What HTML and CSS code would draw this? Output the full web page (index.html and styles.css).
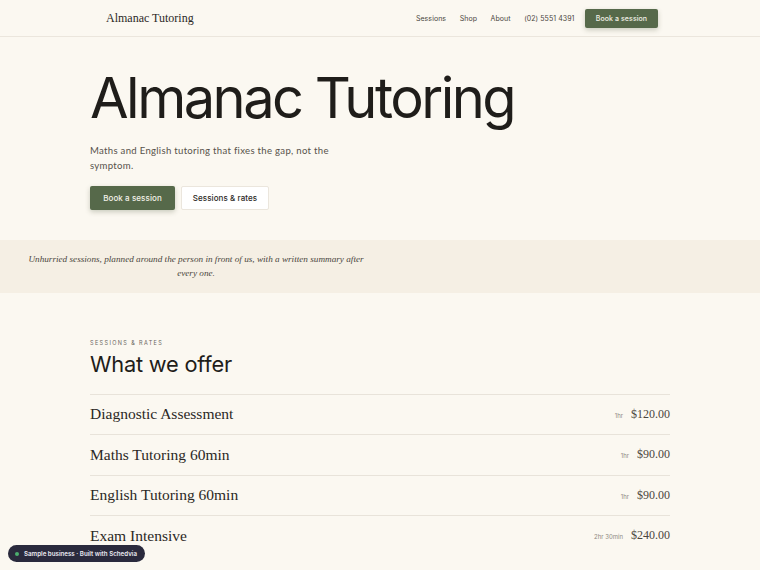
FILE: index.html
```html
<!DOCTYPE html>
<html lang="en">
<head>
<meta charset="utf-8">
<title>Almanac Tutoring</title>
<link rel="stylesheet" href="styles.css">
</head>
<body>
<header class="site-header">
  <div class="header-inner">
    <a class="logo" href="#">Almanac Tutoring</a>
    <nav class="nav">
      <a href="#">Sessions</a>
      <a href="#">Shop</a>
      <a href="#">About</a>
      <a href="#">(02) 5551 4391</a>
      <a class="btn btn-primary btn-small" href="#">Book a session</a>
    </nav>
  </div>
</header>

<section class="hero">
  <h1 class="hero-title">Almanac Tutoring</h1>
  <p class="hero-sub">Maths and English tutoring that fixes the gap, not the symptom.</p>
  <div class="hero-actions">
    <a class="btn btn-primary" href="#">Book a session</a>
    <a class="btn btn-secondary" href="#">Sessions &amp; rates</a>
  </div>
</section>

<section class="band">
  <p class="band-text">Unhurried sessions, planned around the person in front of us, with a written summary after every one.</p>
</section>

<section class="offer">
  <div class="eyebrow">Sessions &amp; rates</div>
  <h2 class="offer-title">What we offer</h2>
  <ul class="services">
    <li class="service"><span class="service-name">Diagnostic Assessment</span><span class="service-meta"><span class="dur">1hr</span><span class="price">$120.00</span></span></li>
    <li class="service"><span class="service-name">Maths Tutoring 60min</span><span class="service-meta"><span class="dur">1hr</span><span class="price">$90.00</span></span></li>
    <li class="service"><span class="service-name">English Tutoring 60min</span><span class="service-meta"><span class="dur">1hr</span><span class="price">$90.00</span></span></li>
    <li class="service"><span class="service-name">Exam Intensive</span><span class="service-meta"><span class="dur">2hr 30min</span><span class="price">$240.00</span></span></li>
  </ul>
</section>

<div class="badge"><span class="badge-dot"></span>Sample business · Built with Schedvia</div>
</body>
</html>
```

FILE: styles.css
```css
* { box-sizing: border-box; }
html, body { margin: 0; padding: 0; }
body {
  background: #fbf8f1;
  color: #1f1d1a;
  font-family: "Inter", "Liberation Sans", sans-serif;
  min-height: 570px;
}
a { text-decoration: none; color: inherit; }

.site-header {
  height: 37px;
  border-bottom: 1px solid #ebe6dd;
}
.header-inner {
  height: 36px;
  padding: 0 102px 0 106px;
  display: flex;
  align-items: center;
  justify-content: space-between;
}
.logo {
  font-family: "Liberation Serif", serif;
  font-size: 12px;
  color: #2b2825;
}
.nav {
  display: flex;
  align-items: center;
  gap: 13.5px;
  font-size: 7px;
  letter-spacing: 0.01em;
  color: #4a4640;
}
.btn {
  display: inline-flex;
  align-items: center;
  justify-content: center;
  border-radius: 2px;
  font-size: 8px;
  font-weight: 500;
  letter-spacing: 0.01em;
}
.btn-primary {
  background: #56694a;
  color: #f3f1e8;
  box-shadow: 0 2px 5px rgba(60, 70, 40, 0.25);
}
.btn-small {
  height: 19px;
  width: 73px;
  font-size: 7px;
  margin-left: -3px;
}
.btn-secondary {
  background: #ffffff;
  color: #2b2825;
  border: 1px solid #ebe6dd;
}

.hero {
  width: 580px;
  margin: 0 auto;
  padding: 31px 0 30px;
}
.hero-title {
  margin: 0;
  font-size: 56px;
  font-weight: 400;
  letter-spacing: -0.045em;
  line-height: 1.1;
  color: #1f1d1a;
}
.hero-sub {
  margin: 13px 0 0;
  width: 240px;
  font-family: "Lato", "Inter", sans-serif;
  font-size: 9.6px;
  line-height: 15px;
  letter-spacing: 0.03em;
  color: #57524b;
}
.hero-actions {
  margin-top: 13px;
  display: flex;
  gap: 6px;
}
.hero-actions .btn {
  height: 24px;
}
.hero-actions .btn-primary { width: 85px; }
.hero-actions .btn-secondary { width: 88px; }

.band {
  background: #f5efe4;
  height: 53px;
  display: flex;
  align-items: center;
}
.band-text {
  margin: 0;
  width: 392px;
  padding: 0 20px;
  text-align: center;
  font-family: "Liberation Serif", serif;
  font-style: italic;
  font-size: 9.2px;
  line-height: 14px;
  color: #4a4640;
}

.offer {
  width: 580px;
  margin: 0 auto;
  padding-top: 47px;
}
.eyebrow {
  font-size: 5.5px;
  letter-spacing: 0.25em;
  text-transform: uppercase;
  color: #6b665e;
}
.offer-title {
  margin: 3px 0 0;
  font-size: 21.8px;
  font-weight: 400;
  letter-spacing: -0.01em;
  color: #1f1d1a;
  line-height: 30px;
}
.services {
  list-style: none;
  margin: 15px 0 0;
  padding: 0;
}
.service {
  height: 40.5px;
  border-top: 1px solid #e8e3da;
  display: flex;
  align-items: center;
  justify-content: space-between;
}
.service-name {
  font-family: "Liberation Serif", serif;
  font-size: 15.5px;
  color: #2b2825;
}
.service-meta {
  display: flex;
  align-items: baseline;
  gap: 8px;
}
.dur {
  font-size: 6px;
  color: #8f8a82;
}
.price {
  font-family: "Liberation Serif", serif;
  font-size: 12px;
  color: #4a4640;
}

.badge {
  position: fixed;
  left: 8px;
  top: 545px;
  height: 17px;
  padding: 0 8px 0 7px;
  background: #2a2a3d;
  color: #eceaf2;
  border-radius: 9px;
  display: flex;
  align-items: center;
  gap: 5px;
  font-size: 6.2px;
  font-weight: 600;
}
.badge-dot {
  width: 4px;
  height: 4px;
  border-radius: 50%;
  background: #4caf6e;
}
```
